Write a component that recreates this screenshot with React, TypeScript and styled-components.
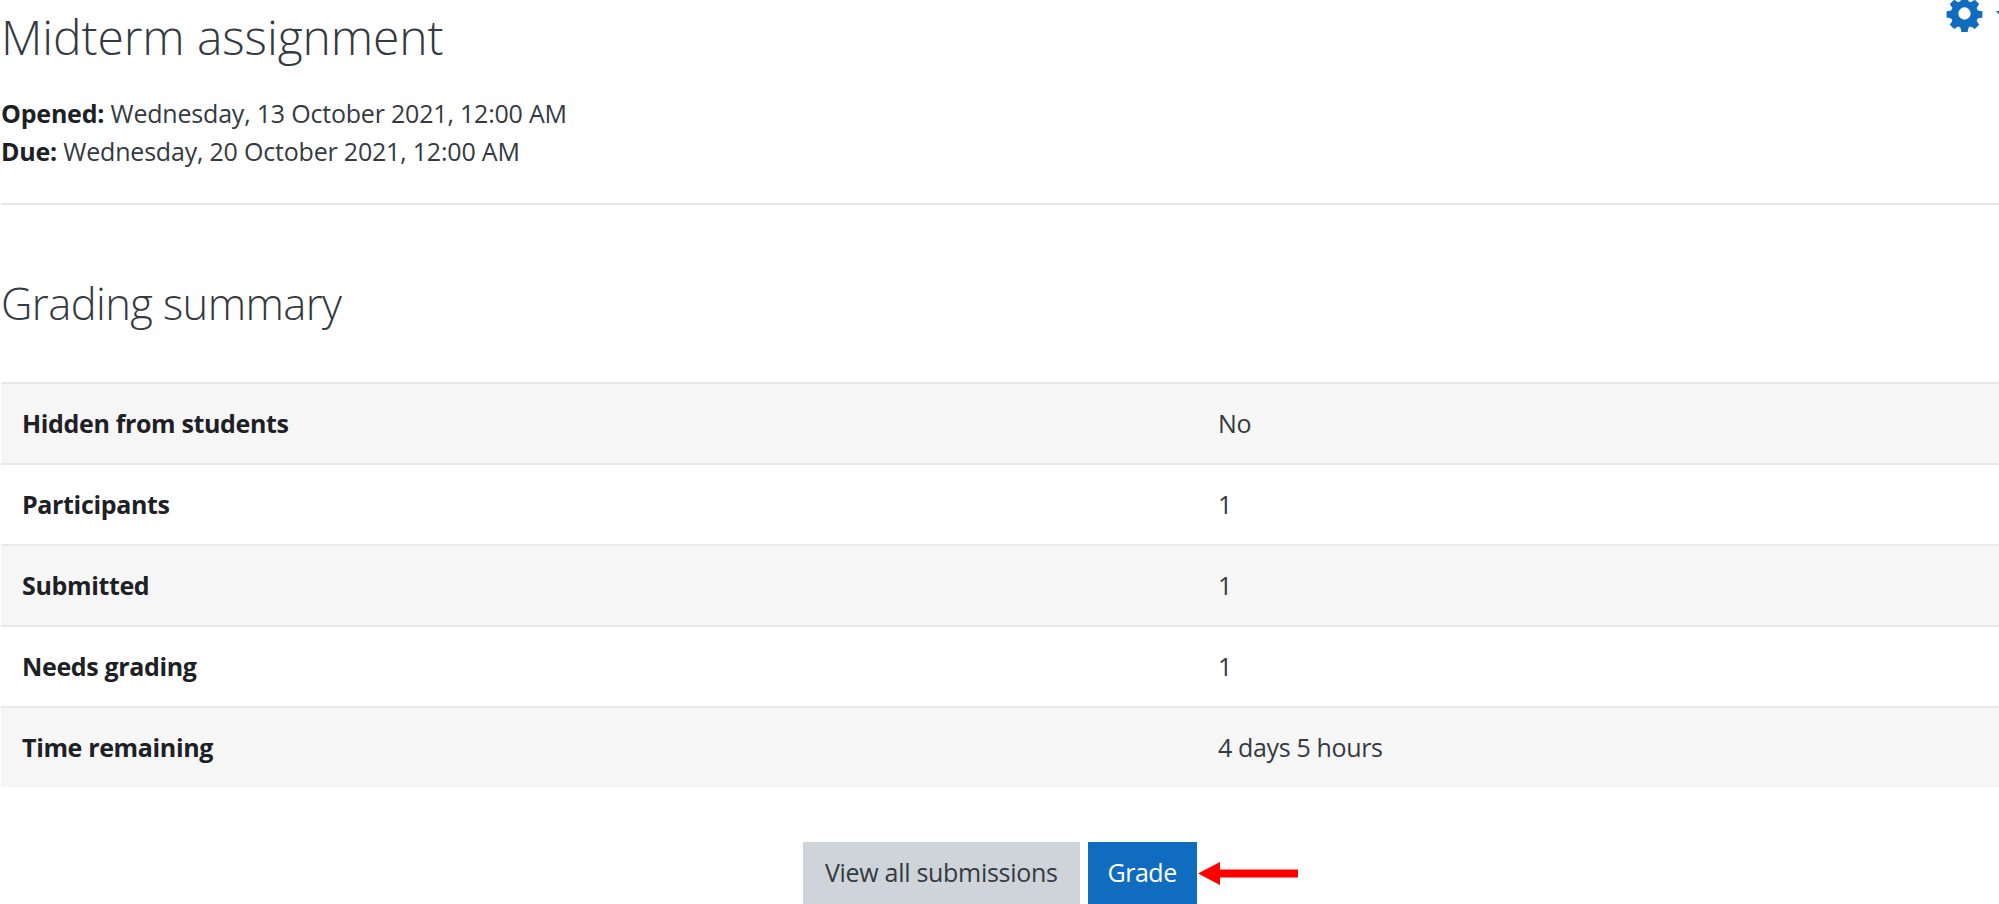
import { FC } from "react";
import styled, { createGlobalStyle } from "styled-components";

const GlobalStyle = createGlobalStyle`
  html, body {
    margin: 0;
    padding: 0;
    background: #fff;
  }
  body {
    height: 904px;
    overflow: hidden;
    font-family: "Open Sans", "Liberation Sans", sans-serif;
    color: #343a40;
  }
`;

const Page = styled.div`
  position: relative;
  width: 1999px;
  height: 904px;
  overflow: hidden;
  padding-left: 1px;
  box-sizing: border-box;
`;

const Title = styled.h1`
  margin: 0;
  padding-top: 5px;
  font-size: 48px;
  line-height: 64px;
  font-weight: 300;
  letter-spacing: -0.1px;
`;

const Dates = styled.div`
  margin-top: 25px;
  font-size: 25px;
  line-height: 38px;
  letter-spacing: -0.2px;
  padding-bottom: 33px;
  border-bottom: 2px solid #e6e8eb;
`;

const DateLine = styled.div`
  white-space: nowrap;
  b {
    color: #1d2125;
    font-weight: 700;
  }
`;

const SectionTitle = styled.h2`
  margin: 0;
  padding-top: 69px;
  font-size: 43.5px;
  line-height: 60px;
  font-weight: 300;
  letter-spacing: -0.6px;
`;

const Table = styled.div`
  margin-top: 48px;
`;

const Row = styled.div<{ $odd: boolean }>`
  display: grid;
  grid-template-columns: 1196px 1fr;
  align-items: center;
  height: 81px;
  box-sizing: border-box;
  border-top: 2px solid #e6e8eb;
  padding: 0 0 2px 21px;
  font-size: 25px;
  letter-spacing: -0.35px;
  background: ${({ $odd }) => ($odd ? "#f6f6f7" : "#fff")};
`;

const RowLabel = styled.div`
  font-weight: 700;
  color: #1d2125;
`;

const Actions = styled.div`
  display: flex;
  margin-top: 55px;
  margin-left: 802px;
  gap: 8px;
  align-items: flex-start;
`;

const Button = styled.div<{ $primary?: boolean }>`
  height: 62px;
  line-height: 60px;
  padding: 0 ${({ $primary }) => ($primary ? "20px" : "22px")};
  font-size: 25px;
  letter-spacing: ${({ $primary }) => ($primary ? "-0.5px" : "-0.3px")};
  white-space: nowrap;
  color: ${({ $primary }) => ($primary ? "#fff" : "#343a40")};
  background: ${({ $primary }) => ($primary ? "#0f6cbf" : "#ced4da")};
`;

const Arrow = styled.svg`
  margin: 20px 0 0 -7px;
`;

const Settings = styled.div`
  position: absolute;
  top: -5px;
  left: 1946px;
  display: flex;
  align-items: center;
  gap: 13px;
  color: #0f6cbf;
`;

const rows = [
  ["Hidden from students", "No"],
  ["Participants", "1"],
  ["Submitted", "1"],
  ["Needs grading", "1"],
  ["Time remaining", "4 days 5 hours"],
];

const App: FC = () => (
  <Page>
    <GlobalStyle />
    <Settings>
      <svg width="37" height="37" viewBox="0 0 24 24" fill="currentColor">
        <path
          fillRule="evenodd"
          d="M10 1h4l.6 3c.5.2 1 .4 1.5.7l2.6-1.6 2.8 2.8-1.6 2.6c.3.5.5 1 .7 1.5l3 .6v4l-3 .6c-.2.5-.4 1-.7 1.500l1.600 2.600-2.800 2.800-2.600-1.600c-.5.3-1 .5-1.500.7l-.6 3h-4l-.6-3c-.5-.2-1-.4-1.500-.7l-2.600 1.600-2.800-2.800 1.600-2.600c-.3-.5-.5-1-.7-1.500l-3-.6v-4l3-.6c.2-.5.4-1 .7-1.500L2.500 5.900l2.800-2.800 2.600 1.600c.5-.3 1-.5 1.500-.7L10 1zm2 7a4 4 0 1 0 0 8 4 4 0 0 0 0-8z"
        />
      </svg>
      <svg width="10" height="6" viewBox="0 0 10 6" fill="currentColor">
        <path d="M0 0h10L5 6z" />
      </svg>
    </Settings>
    <Title>Midterm assignment</Title>
    <Dates>
      <DateLine>
        <b>Opened:</b> Wednesday, 13 October 2021, 12:00 AM
      </DateLine>
      <DateLine>
        <b>Due:</b> Wednesday, 20 October 2021, 12:00 AM
      </DateLine>
    </Dates>
    <SectionTitle>Grading summary</SectionTitle>
    <Table>
      {rows.map(([label, value], i) => (
        <Row key={label} $odd={i % 2 === 0}>
          <RowLabel>{label}</RowLabel>
          <div>{value}</div>
        </Row>
      ))}
    </Table>
    <Actions>
      <Button>View all submissions</Button>
      <Button $primary>Grade</Button>
      <Arrow width="100" height="23" viewBox="0 0 100 23">
        <path d="M0 11.500 L22 0 V7.500 H100 V15.500 H22 V23 Z" fill="#f00" />
      </Arrow>
    </Actions>
  </Page>
);

export default App;
